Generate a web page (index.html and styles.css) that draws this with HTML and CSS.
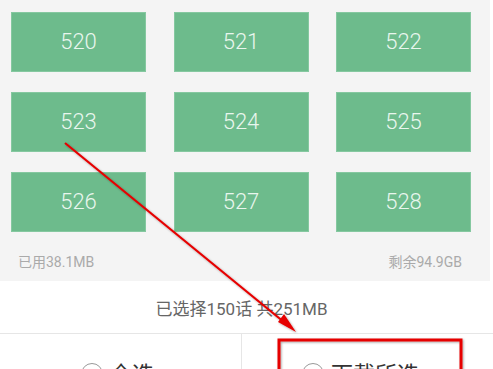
FILE: index.html
```html
<!DOCTYPE html>
<html lang="zh">
<head>
<meta charset="utf-8">
<link rel="stylesheet" href="styles.css">
</head>
<body>
<div class="page">
  <section class="panel">
    <div class="grid">
      <div class="tile">520</div>
      <div class="tile">521</div>
      <div class="tile">522</div>
      <div class="tile">523</div>
      <div class="tile">524</div>
      <div class="tile">525</div>
      <div class="tile">526</div>
      <div class="tile">527</div>
      <div class="tile">528</div>
    </div>
    <div class="storage">
      <span>已用38.1MB</span>
      <span>剩余94.9GB</span>
    </div>
  </section>
  <div class="summary">已选择150话 共251MB</div>
  <div class="actions">
    <div class="action action-left"><span class="radio"></span><span>全选</span></div>
    <div class="action action-right"><span class="radio"></span><span>下载所选</span></div>
  </div>
  <svg class="annot" width="493" height="369" viewBox="0 0 493 369">
    <defs>
      <filter id="sh" x="-10%" y="-10%" width="120%" height="120%">
        <feDropShadow dx="1" dy="1" stdDeviation="1" flood-color="#000" flood-opacity="0.35"/>
      </filter>
    </defs>
    <g filter="url(#sh)">
      <line x1="65" y1="143" x2="290" y2="327" stroke="#e60000" stroke-width="2.2"/>
      <polygon points="296,332 278,322 284,314" fill="#e60000"/>
      <rect x="279" y="340" width="182" height="40" fill="none" stroke="#e60000" stroke-width="3"/>
    </g>
  </svg>
</div>
</body>
</html>
```
FILE: styles.css
```css
html, body {
  margin: 0;
  padding: 0;
  background: #ffffff;
}
.page {
  position: relative;
  width: 493px;
  height: 369px;
  overflow: hidden;
  font-family: Roboto, "Noto Sans CJK SC", sans-serif;
}
.panel {
  background: #f4f4f4;
  width: 490px;
  padding: 12px 0 0 0;
  height: 269px;
  box-sizing: content-box;
}
.grid {
  display: grid;
  grid-template-columns: 135px 135px 135px;
  grid-auto-rows: 60px;
  column-gap: 27.5px;
  row-gap: 20px;
  padding-left: 11px;
}
.tile {
  background: #6dbb8c;
  border: 1px solid #85c8a0;
  box-sizing: border-box;
  display: flex;
  align-items: center;
  justify-content: center;
  padding-bottom: 2px;
  color: #e9f6ee;
  font-size: 22px;
  font-weight: 300;
}
.storage {
  display: flex;
  justify-content: space-between;
  padding: 22px 28px 0 18px;
  font-size: 14px;
  line-height: 17px;
  color: #aaaaaa;
}
.summary {
  height: 52px;
  display: flex;
  align-items: center;
  justify-content: center;
  padding-right: 10px;
  font-size: 17px;
  color: #666666;
  border-bottom: 1px solid #e6e6e6;
}
.actions {
  display: flex;
  height: 80px;
}
.action {
  display: flex;
  align-items: flex-start;
  justify-content: center;
  gap: 7px;
  padding-top: 29px;
  padding-right: 6px;
  box-sizing: border-box;
  font-size: 22px;
  line-height: 24px;
  color: #333333;
}
.action-left {
  flex: 0 0 241px;
}
.action-right {
  flex: 1;
  padding-right: 14px;
  border-left: 1px solid #e6e6e6;
}
.radio {
  width: 22px;
  height: 22px;
  border: 1px solid #999999;
  border-radius: 50%;
  box-sizing: border-box;
  flex: none;
}
.annot {
  position: absolute;
  left: 0;
  top: 0;
  pointer-events: none;
}
```
